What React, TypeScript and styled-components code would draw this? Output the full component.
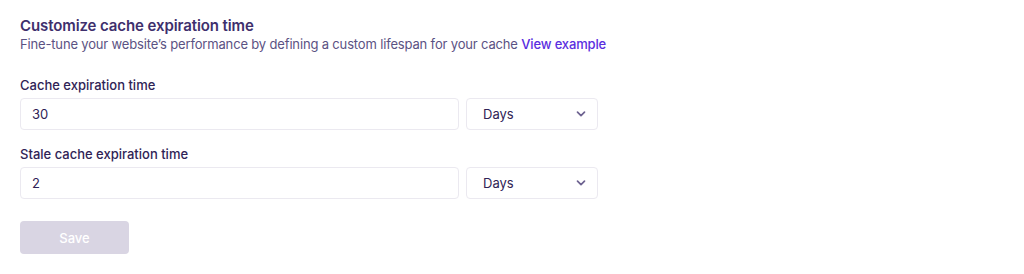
import React, { useState } from "react";
import styled, { createGlobalStyle } from "styled-components";

const GlobalStyle = createGlobalStyle`
  html, body {
    margin: 0;
    padding: 0;
    background: #ffffff;
    font-family: Inter, "Noto Sans", "Liberation Sans", sans-serif;
    -webkit-font-smoothing: antialiased;
  }
  * { box-sizing: border-box; }
`;

const Page = styled.div`
  padding: 15px 20px;
  display: flex;
  flex-direction: column;
`;

const Title = styled.h2`
  margin: 1px 0 0;
  font-size: 15px;
  line-height: 20px;
  font-weight: 600;
  letter-spacing: -0.1px;
  color: #3e2f6d;
`;

const Subtitle = styled.p`
  margin: 0;
  font-size: 13px;
  line-height: 17px;
  letter-spacing: -0.16px;
  color: #5b5283;
`;

const Link = styled.a`
  color: #5a2ee0;
  font-weight: 500;
  text-decoration: none;
  cursor: pointer;
`;

const Form = styled.div`
  margin-top: 24px;
  display: flex;
  flex-direction: column;
  gap: 16px;
`;

const Field = styled.div`
  display: flex;
  flex-direction: column;
  gap: 4px;
`;

const Label = styled.label`
  font-size: 13px;
  line-height: 17px;
  font-weight: 500;
  color: #2f2356;
`;

const Row = styled.div`
  display: flex;
  gap: 7px;
`;

const Input = styled.input`
  width: 439px;
  height: 32px;
  border: 1px solid #ebe9f0;
  border-radius: 4px;
  padding: 0 11px;
  font-family: inherit;
  font-size: 13px;
  color: #2f2356;
  outline: none;
`;

const SelectBox = styled.div`
  position: relative;
  width: 132px;
  height: 32px;
`;

const Select = styled.select`
  appearance: none;
  width: 100%;
  height: 100%;
  border: 1px solid #ebe9f0;
  border-radius: 4px;
  background: #fff;
  padding: 0 16px;
  font-family: inherit;
  font-size: 13px;
  color: #2f2356;
  outline: none;
`;

const Chevron = styled.svg`
  position: absolute;
  right: 12px;
  top: 11px;
  pointer-events: none;
`;

const SaveButton = styled.button`
  margin-top: 22px;
  width: 109px;
  height: 33px;
  border: none;
  border-radius: 4px;
  background: #d9d5e3;
  color: #ffffff;
  font-family: inherit;
  font-size: 13px;
  font-weight: 500;
`;

function UnitSelect() {
  return (
    <SelectBox>
      <Select defaultValue="days">
        <option value="hours">Hours</option>
        <option value="days">Days</option>
        <option value="weeks">Weeks</option>
      </Select>
      <Chevron width="10" height="10" viewBox="0 0 10 10" fill="none">
        <path d="M1.5 3.2 5 6.7 8.5 3.2" stroke="#6e6391" strokeWidth="1.7" strokeLinecap="round" strokeLinejoin="round" />
      </Chevron>
    </SelectBox>
  );
}

export default function App() {
  const [cache, setCache] = useState("30");
  const [stale, setStale] = useState("2");
  return (
    <>
      <GlobalStyle />
      <Page>
        <Title>Customize cache expiration time</Title>
        <Subtitle>
          Fine-tune your website’s performance by defining a custom lifespan for your cache{" "}
          <Link>View example</Link>
        </Subtitle>
        <Form>
          <Field>
            <Label>Cache expiration time</Label>
            <Row>
              <Input value={cache} onChange={(e) => setCache(e.target.value)} />
              <UnitSelect />
            </Row>
          </Field>
          <Field>
            <Label>Stale cache expiration time</Label>
            <Row>
              <Input value={stale} onChange={(e) => setStale(e.target.value)} />
              <UnitSelect />
            </Row>
          </Field>
        </Form>
        <div>
          <SaveButton disabled>Save</SaveButton>
        </div>
      </Page>
    </>
  );
}
